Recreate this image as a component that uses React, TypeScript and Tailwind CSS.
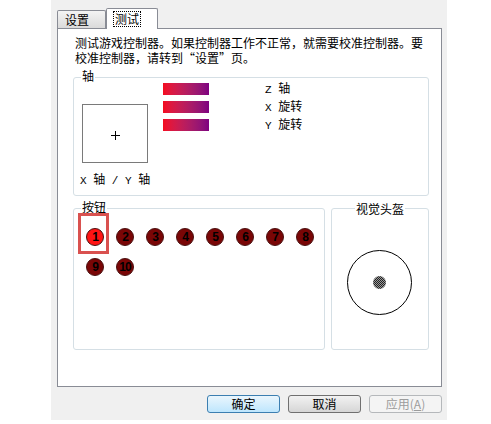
import React from "react";

const Mono = ({ children }: { children: React.ReactNode }) => (
	<span className="font-['Liberation_Mono'] text-[11px] whitespace-pre">{children}</span>
);

const AxisRow = ({ letter, label }: { letter: string; label: string }) => (
	<div className="flex items-center h-[12px]">
		<div className="w-[46px] h-[12px] bg-linear-to-r from-[#f40a1c] to-[#7f0080]" />
		<div className="ml-[56px] leading-[12px] whitespace-nowrap">
			<Mono>{letter} </Mono>
			{label}
		</div>
	</div>
);

const Btn = ({ n, on }: { n: number; on?: boolean }) => (
	<div
		className={`w-[18px] h-[18px] rounded-full border border-[#4a1010] flex items-center justify-center font-['Liberation_Sans'] font-bold text-[12px] leading-none tracking-[-1px] text-black ${
			on ? "bg-[#ff1414]" : "bg-[#7a0606]"
		}`}
	>
		{n}
	</div>
);

const PushButton = ({
	children,
	primary,
	disabled,
}: {
	children: React.ReactNode;
	primary?: boolean;
	disabled?: boolean;
}) => (
	<div
		className={`w-[73px] h-[18px] rounded-[3px] border flex items-center justify-center leading-none ${
			primary
				? "border-[#3c7fb1] bg-linear-to-b from-[#eaf6fd] to-[#bee6fd] text-black"
				: disabled
				? "border-[#b5b8bb] bg-[#f4f4f4] text-[#9c9c9c]"
				: "border-[#707070] bg-linear-to-b from-[#f2f2f2] to-[#d6d6d6] text-black"
		}`}
	>
		{children}
	</div>
);

export default function App() {
	return (
		<div className="w-[491px] h-[424px] bg-white font-['Noto_Sans_CJK_SC',sans-serif] text-[12px] text-black">
			<div className="ml-[51px] w-[396px] h-[420px] bg-[#f0f0f0] flex flex-col">
				{/* tabs */}
				<div className="h-[28px] pl-[6px] flex items-end">
					<div className="w-[49px] h-[18px] border border-b-0 border-[#898c95] rounded-t-[2px] bg-linear-to-b from-[#f4f4f4] to-[#dadada] pl-[7px] leading-[17px]">
						设置
					</div>
					<div className="relative z-10 -mb-px w-[52px] h-[21px] border border-b-0 border-[#898c95] rounded-t-[2px] bg-white pl-[6px] pt-[1px]">
						<span className="border border-dotted border-black px-[1px] leading-[14px] inline-block">测试</span>
					</div>
				</div>

				{/* panel */}
				<div className="ml-[6px] w-[385px] h-[359px] border border-[#898c95] bg-white">
					<div className="pl-[17px] pt-[6px] leading-[15px]">
						测试游戏控制器。如果控制器工作不正常，就需要校准控制器。要
						<br />
						校准控制器，请转到“设置”页。
					</div>

					{/* 轴 */}
					<div className="relative ml-[15px] mt-[12px] w-[356px] h-[119px] border border-[#d5dfe5] rounded-[3px]">
						<span className="absolute -top-[10px] left-[7px] bg-white px-[1px] leading-[15px]">轴</span>
						<div className="flex">
							<div className="w-[74px] shrink-0 pl-[8px] pt-[26px]">
								<div className="w-[66px] h-[59px] border border-[#7a7a7a] flex items-center justify-center pt-[4px]">
									<svg width="9" height="9" viewBox="0 0 9 9">
										<path d="M4.5 0V9M0 4.5H9" stroke="#000" strokeWidth="1" />
									</svg>
								</div>
								<div className="-ml-[2px] mt-[8px] leading-[15px] whitespace-nowrap">
									<Mono>X </Mono>轴<Mono> / Y </Mono>轴
								</div>
							</div>
							<div className="ml-[15px] pt-[5px] flex flex-col gap-[6px]">
								<AxisRow letter="Z" label="轴" />
								<AxisRow letter="X" label="旋转" />
								<AxisRow letter="Y" label="旋转" />
							</div>
						</div>
					</div>

					<div className="ml-[15px] mt-[12px] flex gap-[6px]">
						{/* 按钮 */}
						<div className="relative w-[252px] h-[142px] border border-[#d5dfe5] rounded-[3px]">
							<span className="absolute -top-[10px] left-[7px] bg-white px-[1px] leading-[15px]">按钮</span>
							<div className="absolute left-[4px] top-[4px] w-[31px] h-[41px] border-[3px] border-[#d9514f]" />
							<div className="pl-[12px] pt-[19px] grid grid-cols-[repeat(8,18px)] gap-[12px]">
								{[1, 2, 3, 4, 5, 6, 7, 8, 9, 10].map((n) => (
									<Btn key={n} n={n} on={n === 1} />
								))}
							</div>
						</div>

						{/* 视觉头盔 */}
						<div className="relative w-[98px] h-[142px] border border-[#d5dfe5] rounded-[3px]">
							<span className="absolute -top-[8px] left-1/2 -translate-x-1/2 bg-white px-[1px] leading-[15px] whitespace-nowrap">
								视觉头盔
							</span>
							<div className="flex justify-center pt-[41px] pr-[2px]">
								<div className="w-[65px] h-[65px] rounded-full border border-black flex items-center justify-center">
									<div className="w-[13px] h-[13px] rounded-full bg-[repeating-conic-gradient(#222_0%_25%,#9a9a9a_0%_50%)] bg-size-[2px_2px]" />
								</div>
							</div>
						</div>
					</div>
				</div>

				{/* buttons */}
				<div className="mt-[8px] pr-[5px] flex justify-end gap-[8px]">
					<PushButton primary>确定</PushButton>
					<PushButton>取消</PushButton>
					<PushButton disabled>
						应用(<span className="underline">A</span>)
					</PushButton>
				</div>
			</div>
		</div>
	);
}
